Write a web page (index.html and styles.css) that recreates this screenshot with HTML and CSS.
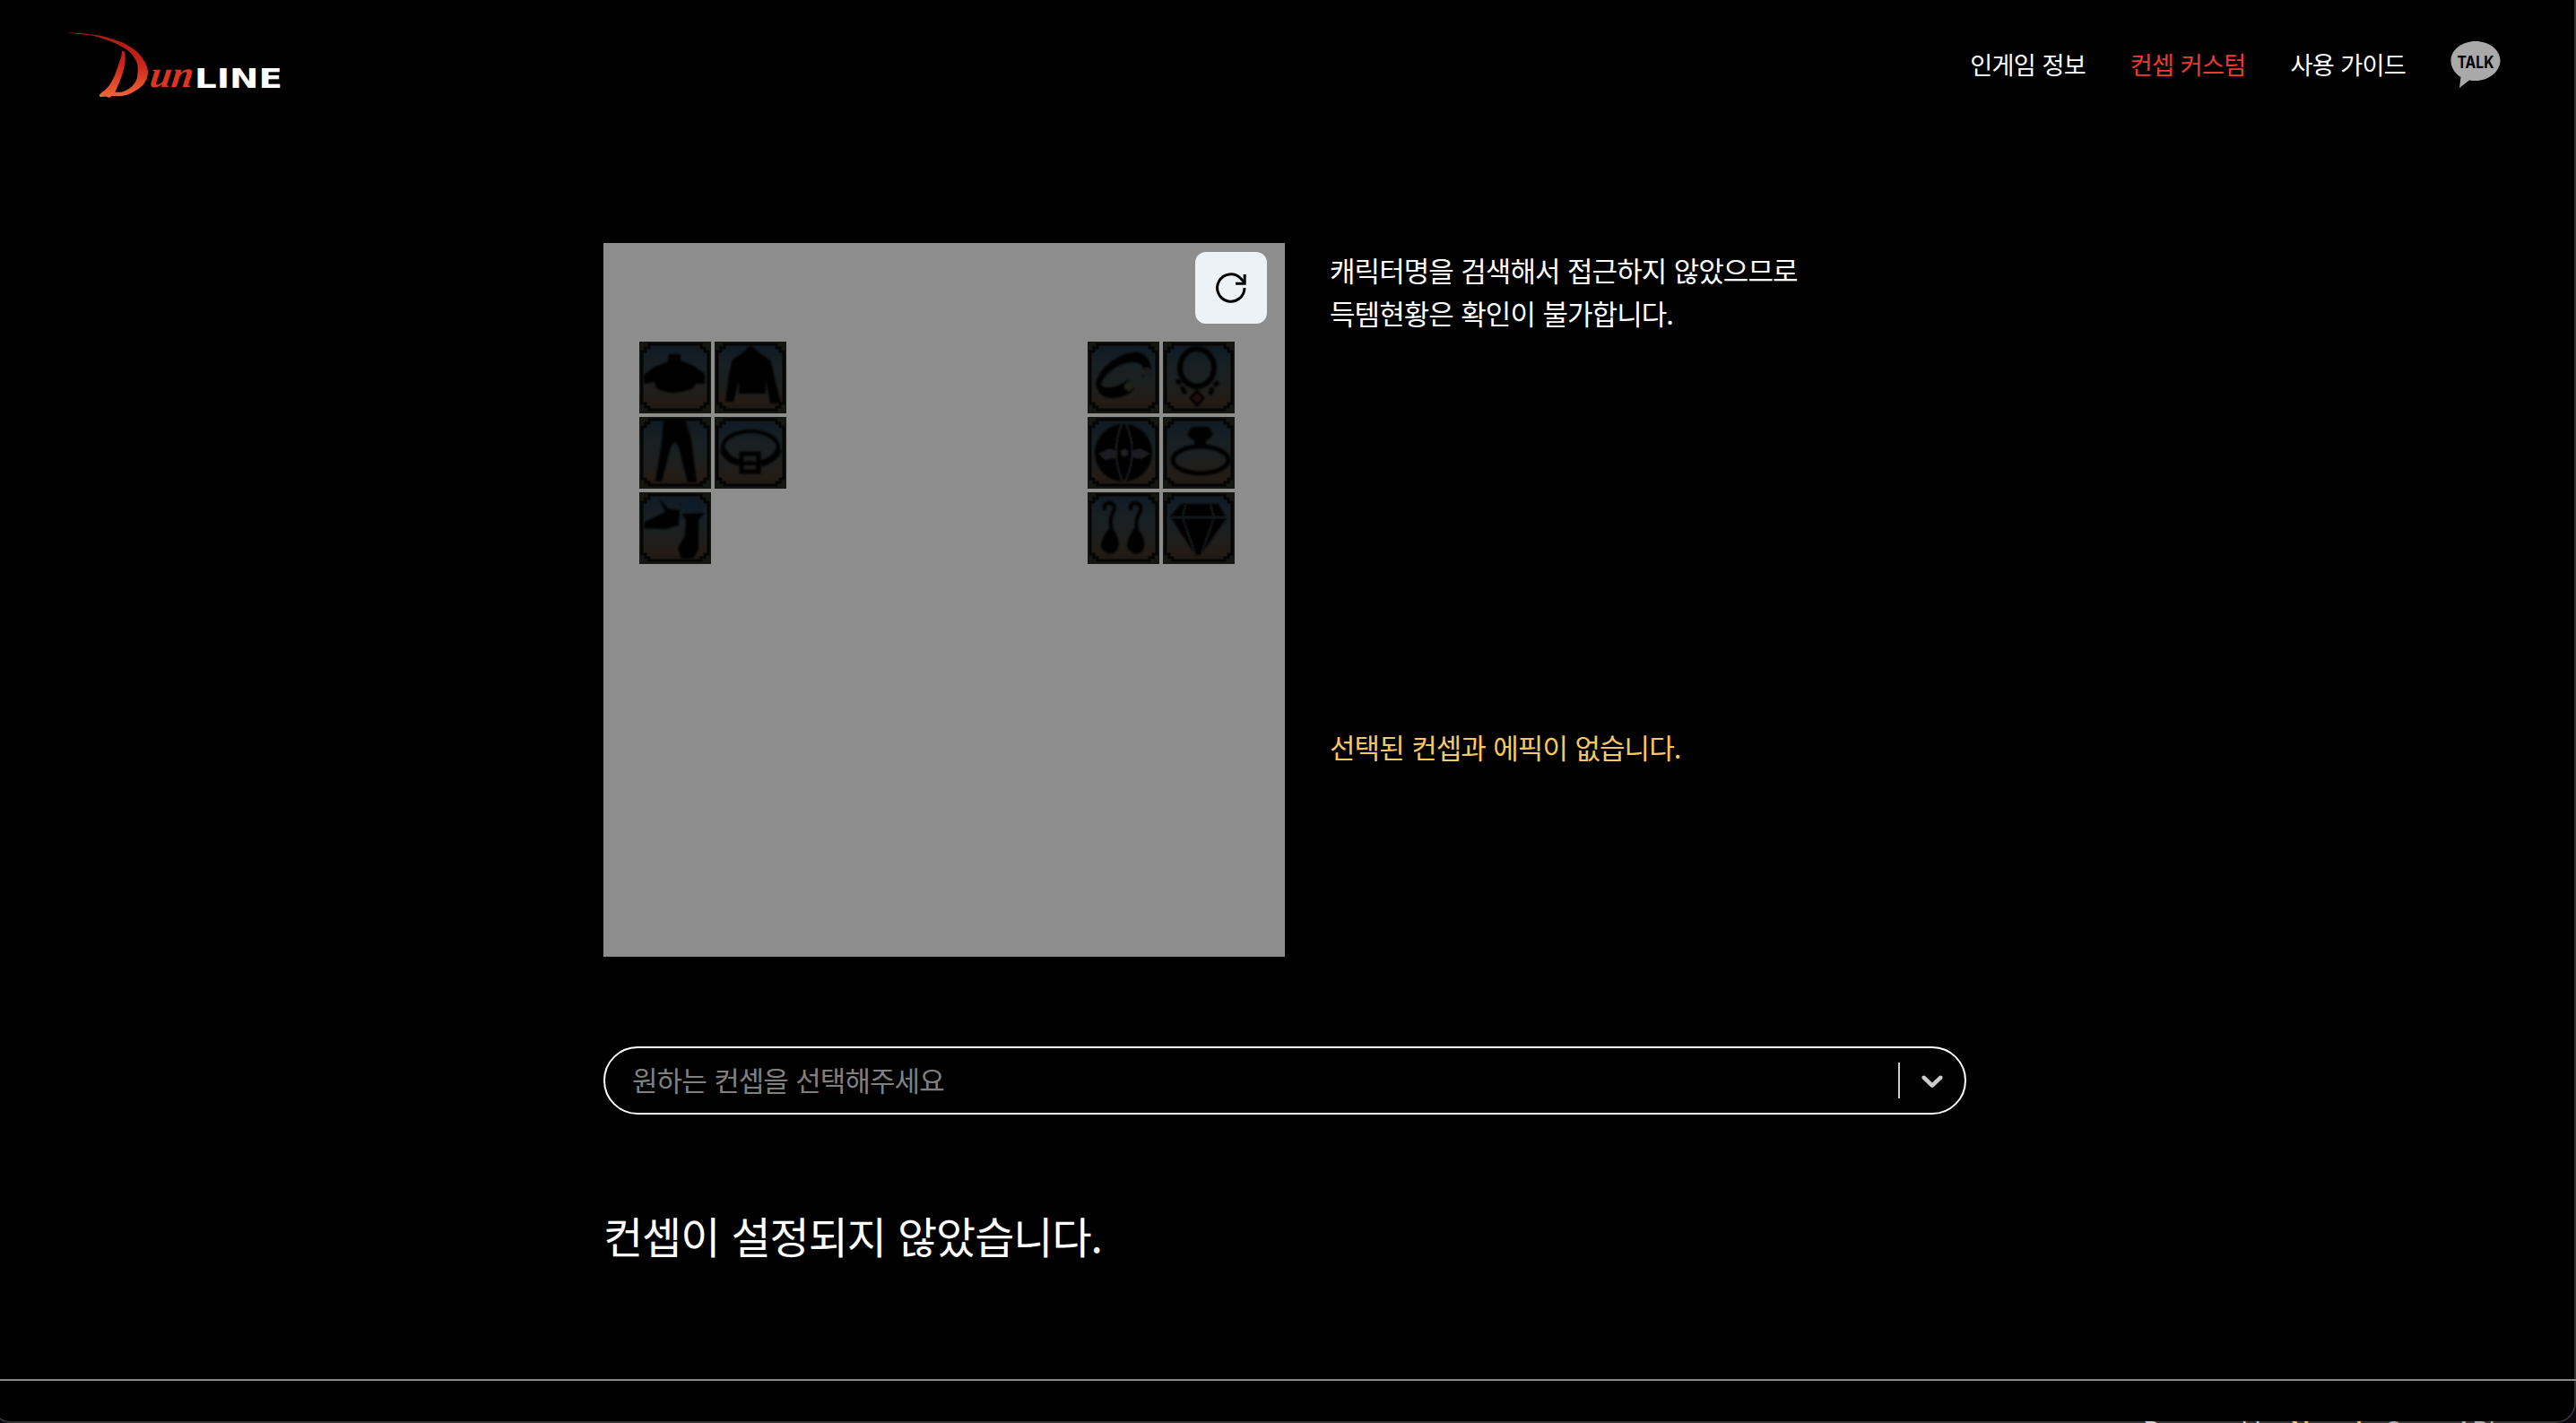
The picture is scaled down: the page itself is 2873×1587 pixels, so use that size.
FILE: index.html
```html
<!DOCTYPE html>
<html lang="ko">
<head>
<meta charset="utf-8">
<title>DunLine</title>
<link rel="stylesheet" href="styles.css">
</head>
<body>
<svg class="defs" width="0" height="0" aria-hidden="true">
  <defs>
    <linearGradient id="cool" x1="0" y1="0" x2="0" y2="1">
      <stop offset="0" stop-color="#0e1924"/><stop offset=".35" stop-color="#182023"/>
      <stop offset=".7" stop-color="#1f1e1c"/><stop offset=".85" stop-color="#241b14"/><stop offset="1" stop-color="#191610"/>
    </linearGradient>
    <linearGradient id="flame" x1="0" y1="0" x2="0" y2="1">
      <stop offset="0" stop-color="#a81815"/><stop offset=".5" stop-color="#cd251a"/><stop offset="1" stop-color="#f0683a"/>
    </linearGradient>
    <filter id="soft" x="-10%" y="-10%" width="120%" height="120%"><feGaussianBlur stdDeviation="1.2"/></filter>
    <symbol id="frame" viewBox="0 0 80 80">
      <rect width="80" height="80" fill="url(#cool)"/>
      <path d="M0 0H80V80H0Z M4 9V71H9V76H71V71H76V9H71V4H9V9Z" fill="#141612" fill-rule="evenodd"/>
      <path d="M11 3H69V7H73V11H77V69H73V73H69V76H11V73H7V69H3V11H7V7H11Z" fill="none" stroke="#040504" stroke-width="3"/>
    </symbol>
  </defs>
</svg>

<header class="header">
  <a class="logo">
    <svg width="250" height="90" viewBox="0 0 250 90">
      <path fill="url(#flame)" d="M-1 5.700C8 5 16 6 24 7.300C34 8 43 10 50.700 13C58 15 65 18 70.700 22.300C77 26 81 31 84 35.700C87 40 89 45 89 49C89 53 88 57 85.700 60.700C83 65 79 68 74 70.700C69 74 63 76 57.300 76.300L49 76L45.700 78L42 76.500L35.700 77.300L34.500 75L37.300 72.300C42 69 46 65 49 59C52 54 54 48 55.700 42.300C58 36 60 31 60 25.700L62.700 26.300C64 31 64 35 63.300 39C62.500 45 61 51 59 55.700C57 61 55 66 52.300 71.700C56 72 59 72 62.300 70.700C67 69 70 67 72.300 64C76 60 77 57 77.300 52.300C78 47 78 43 76.700 39C75 35 73 32 70.700 29C67 25 64 23 60.700 21.700C55 18 50 16 44 14C36 11 30 9 24 8.300Z"/>
      <text class="logo-un" transform="translate(90 66) skewX(-8)" textLength="48" lengthAdjust="spacingAndGlyphs">un</text>
      <text class="logo-line" x="141" y="67" textLength="98" lengthAdjust="spacingAndGlyphs">LINE</text>
    </svg>
  </a>
  <nav class="nav">
    <a>인게임 정보</a>
    <a class="active">컨셉 커스텀</a>
    <a>사용 가이드</a>
    <svg class="talk" width="56" height="54" viewBox="0 0 56 54">
      <path fill="#a9a9a9" d="M28 1C43 1 55.500 10.500 55.500 22.500S43 45 28 45C26 45 23 44.800 21 44.400L10 53L11.500 41C5 37 .5 30.500 .5 22.500C.5 10.500 13 1 28 1Z"/>
      <text x="7.500" y="30.500" textLength="41" lengthAdjust="spacingAndGlyphs">TALK</text>
    </svg>
  </nav>
</header>

<main class="main">
  <section class="top">
    <div class="panel">
      <button class="reset" aria-label="초기화">
        <svg width="40" height="40" viewBox="0 0 40 40" fill="none" stroke="#000" stroke-width="3">
          <path d="M35 20A15.200 15.200 0 1 1 30.500 9.200L35 14"/><path d="M35.200 5V15.200H25"/>
        </svg>
      </button>
      <div class="slots">
        <div class="grid">
          <svg viewBox="0 0 80 80"><use href="#frame"/><g filter="url(#soft)" fill="#030405"><path d="M33 14H46V21L61 27L73 36V47H63L60 52Q38 62 19 52L17 45L5 47V37L17 28L32 22Z"/></g></svg>
          <svg viewBox="0 0 80 80"><use href="#frame"/><g filter="url(#soft)" fill="#030405"><path d="M40 4L51 13L63 22L68 45L74 69H62L57 42V58H27V43L21 67H12L16 36L20 20L32 12Z"/></g></svg>
          <svg viewBox="0 0 80 80"><use href="#frame"/><g filter="url(#soft)" fill="#030405"><path d="M27 3H51L58 25L64 73H54L44 34Q40 23 35 34L25 72H18L25 28Z"/></g></svg>
          <svg viewBox="0 0 80 80"><use href="#frame"/><g filter="url(#soft)" fill="none" stroke="#030405"><ellipse cx="40" cy="34" rx="31" ry="18" stroke-width="4"/><path d="M9 36Q15 50 30 51M52 52Q67 48 72 36" stroke-width="7"/><path d="M30 41H49V61H30Z" stroke-width="5"/><path d="M36 51H42" stroke-width="4"/></g></svg>
          <svg viewBox="0 0 80 80"><use href="#frame"/><g filter="url(#soft)" fill="#030405"><path d="M22 7L32 18L45 20L44 37L29 41L5 40L6 33L29 22Z"/><path d="M47 24L73 23L66 31V64L60 74H47L43 62L51 48L52 31Z"/><path d="M46 10L66 11L70 20H48Z" fill="#0a1a2a"/></g></svg>
        </div>
        <div class="grid">
          <svg viewBox="0 0 80 80"><use href="#frame"/><g filter="url(#soft)"><path d="M11 53C2 38 35 9 57 12C68 15 72 25 70 37L61 39C65 31 62 23 51 23C36 22 16 38 15 48C20 55 34 50 45 43L52 52C47 62 17 70 11 53Z" fill="#030405"/><circle cx="66" cy="34" r="5" fill="#1c1d1e"/><circle cx="46" cy="50" r="5" fill="#20201f"/></g></svg>
          <svg viewBox="0 0 80 80"><use href="#frame"/><g filter="url(#soft)" fill="none" stroke="#030405"><ellipse cx="38" cy="29" rx="19" ry="21" stroke-width="6"/><path d="M15 43L20 47M21 50L25 58M62 45L57 49M55 51L53 59" stroke-width="5"/><path d="M38 55L45 63L38 71L31 63Z" fill="#240d0b" stroke-width="3"/></g></svg>
          <svg viewBox="0 0 80 80"><use href="#frame"/><g filter="url(#soft)"><circle cx="40" cy="40" r="32" fill="#030405"/><path d="M38 8Q25 40 39 72M43 8Q57 40 42 72" fill="none" stroke="#191c1d" stroke-width="2"/><path d="M12 41L25 35L32 38V45L20 48ZM50 38L58 35L70 41L60 47L50 45Z" fill="#1d1f20"/><circle cx="41" cy="40" r="4" fill="#202122"/></g></svg>
          <svg viewBox="0 0 80 80"><use href="#frame"/><g filter="url(#soft)"><ellipse cx="42" cy="48" rx="31" ry="15" fill="none" stroke="#030405" stroke-width="5"/><path d="M32 11H51L56 20L48 27V34H35V27L27 20Z" fill="#030405"/></g></svg>
          <svg viewBox="0 0 80 80"><use href="#frame"/><g filter="url(#soft)" fill="none" stroke="#030405" stroke-width="4"><path d="M19 20Q17 11 25 12Q33 14 28 23Q24 29 27 43M48 20Q47 11 54 12Q62 14 58 23Q53 29 55 43"/><path d="M26 41Q37 57 30 65Q23 69 17 61Q16 54 26 41M54 41Q66 57 59 65Q52 69 46 61Q45 54 54 41" fill="#030405"/></g></svg>
          <svg viewBox="0 0 80 80"><use href="#frame"/><g filter="url(#soft)"><path d="M20 13H62L71 29L42 70H36L8 27Z" fill="#030405"/><path d="M25 14L22 28L36 69M53 14L57 28L43 69M10 28H70" fill="none" stroke="#191b1d" stroke-width="2"/></g></svg>
        </div>
      </div>
    </div>
    <div class="notes">
      <p class="status">캐릭터명을 검색해서 접근하지 않았으므로<br>득템현황은 확인이 불가합니다.</p>
      <p class="picked">선택된 컨셉과 에픽이 없습니다.</p>
    </div>
  </section>

  <div class="select">
    <span class="placeholder">원하는 컨셉을 선택해주세요</span>
    <span class="separator"></span>
    <svg class="chevron" width="40" height="40" viewBox="0 0 20 20" fill="#ccc"><path d="M4.516 7.548c0.436-0.446 1.043-0.481 1.576 0l3.908 3.747 3.908-3.747c0.533-0.481 1.141-0.446 1.574 0 0.436 0.445 0.408 1.197 0 1.615-0.406 0.418-4.695 4.502-4.695 4.502-0.217 0.223-0.502 0.335-0.787 0.335s-0.570-0.112-0.789-0.335c0 0-4.287-4.084-4.695-4.502s-0.436-1.170 0-1.615z"/></svg>
  </div>

  <h1 class="heading">컨셉이 설정되지 않았습니다.</h1>
</main>

<div class="window-edge"></div>
<footer class="footer">Powered by <b>Neople</b> <span>Open API</span></footer>
</body>
</html>
```
FILE: styles.css
```css
* { box-sizing: border-box; }
html { background: #000; overflow: hidden; }
body {
  margin: 0;
  height: 1587px;
  overflow: hidden;
  position: relative;
  background: #000;
  color: #fff;
  font-family: "Noto Sans CJK KR", sans-serif;
  font-size: 31px;
  letter-spacing: -0.95px;
  word-spacing: 0.7px;
}
.defs { display: block; }
p, h1 { margin: 0; font-weight: 400; }

.header {
  height: 144px;
  display: flex;
  justify-content: space-between;
  padding: 0 84px 0 76px;
}
.logo { padding-top: 31px; }
.logo svg { display: block; overflow: visible; }
.logo-un { font: italic 900 42px "Liberation Serif", serif; fill: #dc3520; letter-spacing: 0; }
.logo-line { font: 700 30.5px "DejaVu Sans", sans-serif; fill: #fff; letter-spacing: 0; }
.nav {
  display: flex;
  align-items: center;
  gap: 50px;
  font-size: 27.2px;
  letter-spacing: -0.8px;
  white-space: nowrap;
}
.nav a { padding-bottom: 2px; }
.nav .active { color: #ee3a30; }
.talk text { font: 700 19px Inter, sans-serif; fill: #000; letter-spacing: 0; }

.main { width: 1520px; margin: 127px 0 0 673px; }
.top { display: flex; gap: 50px; }
.panel {
  width: 760px;
  height: 796px;
  padding: 10px 20px 0 40px;
  background: #8d8d8d;
}
.reset {
  display: flex;
  align-items: center;
  justify-content: center;
  width: 80px;
  height: 80px;
  margin-left: auto;
  padding: 0;
  border: 0;
  border-radius: 12px;
  background: #edf2f7;
}
.slots { display: flex; justify-content: space-between; padding: 20px 36px 0 0; }
.grid { display: grid; grid-template-columns: 80px 80px; grid-auto-rows: 80px; gap: 4px; align-content: start; }
.notes { display: flex; flex-direction: column; line-height: 48px; white-space: nowrap; }
.status { height: 532px; padding-top: 6px; }
.picked { color: #f9c763; padding-top: 6px; }

.select {
  display: flex;
  align-items: center;
  height: 76px;
  margin-top: 100px;
  padding: 0 16px 0 30px;
  border: 2px solid #fff;
  border-radius: 38px;
}
.placeholder { flex: 1; color: #808080; line-height: 44px; padding-bottom: 3px; }
.separator { width: 2px; height: 40px; margin-right: 16px; background: #ccc; }
.heading { margin-top: 97px; font-size: 48px; line-height: 75px; letter-spacing: -1.05px; }

.footer {
  position: absolute;
  top: 1538px;
  left: 0;
  right: 0;
  height: 100px;
  padding: 39px 90px 0 0;
  border-top: 2px solid #888;
  text-align: right;
  font-family: Inter, sans-serif;
  font-size: 28px;
  line-height: 34px;
  letter-spacing: 0;
  word-spacing: 0;
  color: #ccc;
}
.footer b { color: #f5c542; font-weight: 600; }
.footer span { color: #aaa; }
.window-edge {
  position: absolute;
  inset: -40px 0 0 -10px;
  border: 2px solid #333;
  border-radius: 22px;
  box-shadow: 0 0 0 20px #0b0710;
}
```
